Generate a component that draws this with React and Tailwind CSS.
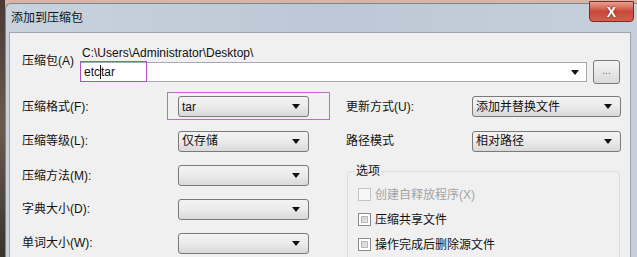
const FONT = { fontFamily: '"Liberation Sans", "Noto Sans CJK SC", sans-serif' };

const Arrow = () => (
  <svg width="8" height="5" viewBox="0 0 8 5">
    <path d="M0 0 L8 0 L4 5 Z" fill="#111" />
  </svg>
);

const Combo = ({ text, w }) => (
  <div
    className={`${w} h-[21px] rounded-[3px] border border-[#7a7a7a] bg-gradient-to-b from-[#f3f3f3] via-[#ebebeb] to-[#d9d9d9] flex items-center justify-between pl-[3px] pr-[8px] text-[12px] text-[#111]`}
  >
    <span className="leading-[14px]">{text}</span>
    <Arrow />
  </div>
);

const Check = ({ text, disabled }) => (
  <div className="h-[25px] shrink-0 flex items-center gap-[4px]">
    {disabled ? (
      <div className="w-[13px] h-[13px] border border-[#c4c4c4] bg-[#f7f7f7]" />
    ) : (
      <div className="w-[13px] h-[13px] border border-[#8a8a8a] bg-white p-[2px]">
        <div className="w-full h-full bg-gradient-to-br from-[#cfcfcf] to-[#e9e9e9] border border-[#b8b8b8]" />
      </div>
    )}
    <span className={`text-[12px] leading-[14px] ${disabled ? 'text-[#a3a3a3]' : 'text-[#111]'}`}>{text}</span>
  </div>
);

const Label = ({ children, w }) => (
  <div className={`${w} text-[12px] leading-[14px] text-[#111]`}>{children}</div>
);

const App = () => {
  return (
    <div className="w-[637px] h-[257px] overflow-hidden flex bg-[#d8b4a6]" style={FONT}>
      {/* desktop strip */}
      <div className="w-[5px] h-full shrink-0 bg-gradient-to-b from-[#4a3a35] via-[#6b5a50] to-[#3a3330]" />
      {/* window */}
      <div className="flex-1 mt-[3px] rounded-tl-[6px] border-l border-t border-[#7d8894] bg-gradient-to-r from-[#c9d3de] via-[#bcc8d6] to-[#c6d0dc] flex flex-col relative">
        {/* title bar */}
        <div className="h-[28px] shrink-0 flex items-center pl-[5px]">
          <span className="text-[12px] leading-[14px] text-[#111]">添加到压缩包</span>
        </div>
        {/* close button */}
        <div className="absolute right-[3px] -top-[3px] w-[45px] h-[21px] rounded-b-[4px] border border-[#7a2a22] bg-gradient-to-b from-[#e8a090] via-[#c8483a] to-[#d2604e] flex items-center justify-center">
          <span className="text-white text-[14px] font-bold leading-none" style={{ textShadow: '0 0 2px #5a1a10' }}>X</span>
        </div>
        {/* client area */}
        <div className="h-[240px] shrink-0 ml-[3px] mr-[6px] border border-[#9aa4ae] bg-[#f0f0f0] flex flex-col">
          {/* top section */}
          <div className="h-[57px] shrink-0 flex pl-[12px]">
            <div className="w-[58px] pt-[21px]">
              <Label>压缩包(A)</Label>
            </div>
            <div className="flex flex-col pt-[13px]">
              <div className="text-[12px] leading-[14px] text-[#111] pl-[2px]">C:\Users\Administrator\Desktop\</div>
              <div className="flex items-center gap-[6px]">
                <div className="relative w-[507px] h-[20px] border border-[#a6abb3] bg-white flex items-center justify-between pl-[3px] pr-[7px]">
                  <span className="text-[12px] leading-[14px] text-[#111]">
                    etc<span className="border-l border-[#111]" />tar
                  </span>
                  <Arrow />
                  <div className="absolute -left-[1px] -top-[2px] w-[67px] h-[21px] border-[1.5px] border-[#b04fc4]" />
                </div>
                <div className="w-[27px] h-[24px] rounded-[3px] border border-[#7a7a7a] bg-gradient-to-b from-[#f4f4f4] to-[#dadada] flex items-center justify-center text-[10px] text-[#666] leading-none pb-[2px]">
                  ...
                </div>
              </div>
            </div>
          </div>
          {/* bottom section */}
          <div className="flex shrink-0 pl-[12px]">
            {/* left column */}
            <div className="flex flex-col">
              <div className="h-[33px] shrink-0 flex items-center">
                <Label w="w-[156px]">压缩格式(F):</Label>
                <div className="relative">
                  <Combo text="tar" w="w-[131px]" />
                  <div className="absolute -left-[11px] -top-[4px] w-[163px] h-[28px] border-[1.5px] border-[#c268d0]" />
                </div>
              </div>
              <div className="h-[36px] shrink-0 flex items-center">
                <Label w="w-[156px]">压缩等级(L):</Label>
                <Combo text="仅存储" w="w-[131px]" />
              </div>
              <div className="h-[33px] shrink-0 flex items-center">
                <Label w="w-[156px]">压缩方法(M):</Label>
                <Combo text="" w="w-[131px]" />
              </div>
              <div className="h-[34px] shrink-0 flex items-center">
                <Label w="w-[156px]">字典大小(D):</Label>
                <Combo text="" w="w-[131px]" />
              </div>
              <div className="h-[34px] shrink-0 flex items-center">
                <Label w="w-[156px]">单词大小(W):</Label>
                <Combo text="" w="w-[131px]" />
              </div>
            </div>
            {/* right column */}
            <div className="flex flex-col ml-[37px]">
              <div className="h-[33px] shrink-0 flex items-center">
                <Label w="w-[126px]">更新方式(U):</Label>
                <Combo text="添加并替换文件" w="w-[149px]" />
              </div>
              <div className="h-[36px] shrink-0 flex items-center">
                <Label w="w-[126px]">路径模式</Label>
                <Combo text="相对路径" w="w-[149px]" />
              </div>
              <div className="relative shrink-0 mt-[12px] ml-[1px] w-[273px] h-[120px] border border-[#d5dfe5] rounded-[3px] pt-[10px] pl-[10px]">
                <span className="absolute -top-[8px] left-[6px] px-[2px] bg-[#f0f0f0] text-[12px] leading-[14px] text-[#111]">选项</span>
                <Check text="创建自释放程序(X)" disabled />
                <Check text="压缩共享文件" />
                <Check text="操作完成后删除源文件" />
              </div>
            </div>
          </div>
        </div>
      </div>
    </div>
  );
};

export default App;
